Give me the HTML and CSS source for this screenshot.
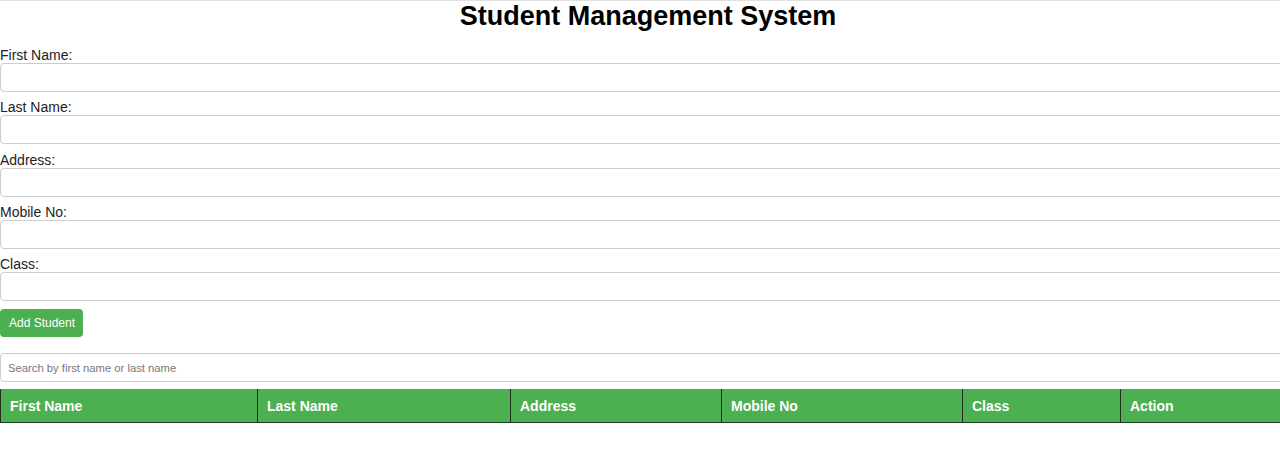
FILE: index.html
```html
<!DOCTYPE html>
<html>
<head>
<meta charset="utf-8">
<title>Student Management System</title>
<link rel="stylesheet" href="styles.css">
</head>
<body>
<div class="page">
  <h1 class="title">Student Management System</h1>
  <form class="form">
    <label class="label">First Name:</label>
    <input class="input" type="text">
    <label class="label">Last Name:</label>
    <input class="input" type="text">
    <label class="label">Address:</label>
    <input class="input" type="text">
    <label class="label">Mobile No:</label>
    <input class="input" type="text">
    <label class="label">Class:</label>
    <input class="input" type="text">
    <button class="btn" type="button">Add Student</button>
  </form>
  <input class="search" type="text" placeholder="Search by first name or last name">
  <table class="table">
    <thead>
      <tr>
        <th class="c1">First Name</th>
        <th class="c2">Last Name</th>
        <th class="c3">Address</th>
        <th class="c4">Mobile No</th>
        <th class="c5">Class</th>
        <th class="c6">Action</th>
      </tr>
    </thead>
    <tbody></tbody>
  </table>
</div>
</body>
</html>
```
FILE: styles.css
```css
html, body {
  margin: 0;
  padding: 0;
  overflow: hidden;
  background: #fff;
}
.page {
  width: 1296px;
  border-top: 1px solid #e0e0e0;
  font-family: "Liberation Sans", Arial, sans-serif;
  color: #111;
}
.title {
  margin: 0;
  height: 46px;
  font-size: 27px;
  line-height: 30px;
  font-weight: bold;
  text-align: center;
  color: #000;
}
.form {
  display: flex;
  flex-direction: column;
  margin: 0;
}
.label {
  display: block;
  font-size: 14px;
  line-height: 16px;
  height: 16px;
  color: #222;
}
.input {
  box-sizing: border-box;
  width: 100%;
  height: 29px;
  margin: 0 0 7.25px 0;
  border: 1px solid #ccc;
  border-radius: 4px;
  padding: 0 8px;
  font-family: inherit;
  font-size: 14px;
}
.btn {
  align-self: flex-start;
  box-sizing: border-box;
  height: 28px;
  width: 83px;
  padding: 0 0 0 1px;
  margin: 0.75px 0 16px 0;
  border: none;
  border-radius: 4px;
  background: #4caf50;
  color: #fff;
  font-family: inherit;
  font-size: 12px;
}
.search {
  display: block;
  box-sizing: border-box;
  width: 100%;
  height: 29px;
  margin: 0 0 7px 0;
  border: 1px solid #ccc;
  border-radius: 4px;
  padding: 0 7px;
  font-family: inherit;
  font-size: 11.25px;
}
.search::placeholder {
  color: #777;
}
.table {
  width: 100%;
  border-collapse: collapse;
  table-layout: fixed;
  border-top: 1px solid #6e9a6e;
}
.table th {
  box-sizing: border-box;
  height: 33px;
  background: #4caf50;
  color: #fff;
  font-size: 14px;
  font-weight: bold;
  text-align: left;
  padding: 0 8px 0 9px;
  border-left: 1px solid #1f2f1f;
  border-right: 1px solid #1f2f1f;
  border-bottom: 1px solid #1f3a1f;
}
.c1 { width: 257px; }
.c2 { width: 253px; }
.c3 { width: 211px; }
.c4 { width: 241px; }
.c5 { width: 158px; }
```
